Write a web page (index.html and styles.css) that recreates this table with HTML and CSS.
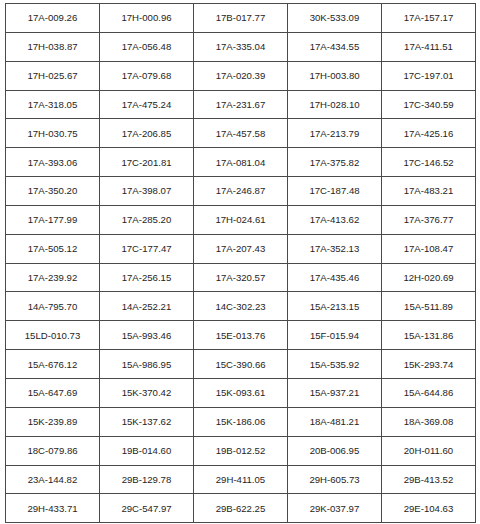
FILE: index.html
```html
<!DOCTYPE html>
<html>
<head>
<meta charset="utf-8">
<link rel="stylesheet" href="styles.css">
</head>
<body>
<table class="grid">
<tr><td>17A-009.26</td><td>17H-000.96</td><td>17B-017.77</td><td>30K-533.09</td><td>17A-157.17</td></tr>
<tr><td>17H-038.87</td><td>17A-056.48</td><td>17A-335.04</td><td>17A-434.55</td><td>17A-411.51</td></tr>
<tr><td>17H-025.67</td><td>17A-079.68</td><td>17A-020.39</td><td>17H-003.80</td><td>17C-197.01</td></tr>
<tr><td>17A-318.05</td><td>17A-475.24</td><td>17A-231.67</td><td>17H-028.10</td><td>17C-340.59</td></tr>
<tr><td>17H-030.75</td><td>17A-206.85</td><td>17A-457.58</td><td>17A-213.79</td><td>17A-425.16</td></tr>
<tr><td>17A-393.06</td><td>17C-201.81</td><td>17A-081.04</td><td>17A-375.82</td><td>17C-146.52</td></tr>
<tr><td>17A-350.20</td><td>17A-398.07</td><td>17A-246.87</td><td>17C-187.48</td><td>17A-483.21</td></tr>
<tr><td>17A-177.99</td><td>17A-285.20</td><td>17H-024.61</td><td>17A-413.62</td><td>17A-376.77</td></tr>
<tr><td>17A-505.12</td><td>17C-177.47</td><td>17A-207.43</td><td>17A-352.13</td><td>17A-108.47</td></tr>
<tr><td>17A-239.92</td><td>17A-256.15</td><td>17A-320.57</td><td>17A-435.46</td><td>12H-020.69</td></tr>
<tr><td>14A-795.70</td><td>14A-252.21</td><td>14C-302.23</td><td>15A-213.15</td><td>15A-511.89</td></tr>
<tr><td>15LD-010.73</td><td>15A-993.46</td><td>15E-013.76</td><td>15F-015.94</td><td>15A-131.86</td></tr>
<tr><td>15A-676.12</td><td>15A-986.95</td><td>15C-390.66</td><td>15A-535.92</td><td>15K-293.74</td></tr>
<tr><td>15A-647.69</td><td>15K-370.42</td><td>15K-093.61</td><td>15A-937.21</td><td>15A-644.86</td></tr>
<tr><td>15K-239.89</td><td>15K-137.62</td><td>15K-186.06</td><td>18A-481.21</td><td>18A-369.08</td></tr>
<tr><td>18C-079.86</td><td>19B-014.60</td><td>19B-012.52</td><td>20B-006.95</td><td>20H-011.60</td></tr>
<tr><td>23A-144.82</td><td>29B-129.78</td><td>29H-411.05</td><td>29H-605.73</td><td>29B-413.52</td></tr>
<tr><td>29H-433.71</td><td>29C-547.97</td><td>29B-622.25</td><td>29K-037.97</td><td>29E-104.63</td></tr>
</table>
</body>
</html>
```
FILE: styles.css
```css
html, body {
  margin: 0;
  padding: 0;
  background: #ffffff;
}
body {
  padding: 3px 0 0 5px;
  font-family: "Liberation Sans", Arial, sans-serif;
}
.grid {
  border-collapse: collapse;
  table-layout: fixed;
  width: 471px;
}
.grid td {
  border: 1px solid #4a4a4a;
  height: 27.85px;
  padding: 0;
  text-align: center;
  vertical-align: middle;
  font-size: 9.6px;
  color: #1e1e1e;
}
```
